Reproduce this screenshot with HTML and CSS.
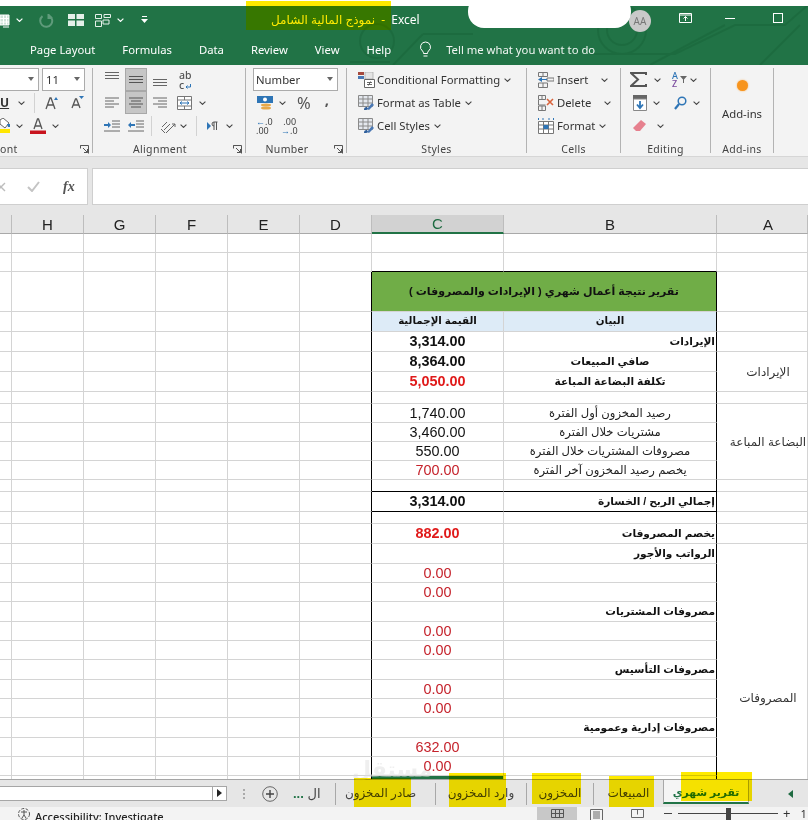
FILE: index.html
```html
<!DOCTYPE html>
<html lang="en">
<head>
<meta charset="utf-8">
<title>Excel</title>
<link rel="stylesheet" href="styles.css">
</head>
<body>
<svg class="sprite" width="0" height="0">
  <symbol id="chev" viewBox="0 0 7 4"><path d="M.6.6 3.5 3.4 6.4.6" fill="none" stroke="#444" stroke-width="1.1"/></symbol>
  <symbol id="chevw" viewBox="0 0 7 4"><path d="M.6.6 3.5 3.4 6.4.6" fill="none" stroke="#fff" stroke-width="1.2"/></symbol>
  <symbol id="launch" viewBox="0 0 9 9"><path d="M.5.5h8v8M.5.5v3M.5.5h3M3 3l4.5 4.5M4 7.5h3.5V4" fill="none" stroke="#555"/></symbol>
  <symbol id="tableico" viewBox="0 0 17 16"><path d="M.5.5h14v11H.5zM.5 4h14M5 .5v11M10 .5v11M.5 8h14" fill="#e4e8ee" stroke="#8a8a8a"/><path d="M9 14l5-6 2 2-5 5z" fill="#4a78b4"/><path d="M6 15c0-3 2-3 3-3l1 2c-1 1-2 1-4 1z" fill="#2f5f9b"/></symbol>
</svg>
<div class="app">
  <div class="chrome">
  <svg class="circuit" width="808" height="59" viewBox="0 6 808 59"><g fill="none" stroke="#1c6a3e" stroke-width="2"><circle cx="377" cy="41" r="17"/><circle cx="622" cy="30" r="24"/><circle cx="622" cy="30" r="15"/><path d="M350 62h40M423 34h50M423 34l-30 31M590 54h85l60-29h50l23-20M650 65l75-40M760 65l40-40"/></g></svg>
  <header class="titlebar">
    <svg class="t-save" width="10" height="15" viewBox="0 0 10 15"><path d="M0 1h9v10H0zM0 4.500h9M0 8h9M3.500 1v10M6.500 1v10" fill="#cfe3d8" stroke="#fff"/><path d="M3 13h6" stroke="#fff"/></svg>
    <svg class="t-chev1" width="7" height="4"><use href="#chevw"/></svg>
    <svg class="t-undo" width="15" height="15" viewBox="0 0 15 15"><path d="M10 2.500a6 6 0 1 1-6.500.6M9.500 1v4h4" fill="none" stroke="#5f9b7b" stroke-width="2"/></svg>
    <svg class="t-panes" width="16" height="13" viewBox="0 0 16 13"><path d="M0 0h7v5H0zM8.500 0H16v5H8.500zM0 6.500h7V12H0zM8.500 6.500H16V12H8.500z" fill="#e4f0e9"/></svg>
    <svg class="t-panes2" width="16" height="13" viewBox="0 0 16 13"><path d="M.5.5h6v4h-6zM9 .5h6.500v3H9zM.5 7h6v5.500h-6zM8 6h6v4H8z" fill="none" stroke="#e4f0e9"/></svg>
    <svg class="t-chev2" width="7" height="4"><use href="#chevw"/></svg>
    <svg class="t-drop" width="7" height="8" viewBox="0 0 7 8"><path d="M1 .5h5" stroke="#fff"/><path d="M0 3h7L3.500 7z" fill="#fff"/></svg>
    <div class="t-title">نموذج المالية الشامل&nbsp; - &nbsp;Excel</div>
    <div class="t-pill"></div>
    <div class="t-avatar">AA</div>
    <svg class="t-disp" width="13" height="10" viewBox="0 0 13 10"><path d="M.5.5h12v9H.5zM.5 2h12M6.500 8V3.500M4.500 5.500l2-2 2 2" fill="none" stroke="#fff"/></svg>
    <div class="t-min"></div>
    <div class="t-max"></div>
  </header>
  <nav class="tabsbar">
    <span class="tb tb-cut">t</span><span class="tb">Page Layout</span><span class="tb">Formulas</span><span class="tb">Data</span><span class="tb">Review</span><span class="tb">View</span><span class="tb">Help</span>
    <svg class="bulb" width="13" height="17" viewBox="0 0 13 17"><path d="M6.500 1a5 5 0 0 0-3 9c.8.800 1 1.500 1 2.500h4c0-1 .2-1.700 1-2.500a5 5 0 0 0-3-9zM4.500 15h4" fill="none" stroke="#fff"/></svg>
    <span class="tell">Tell me what you want to do</span>
  </nav>
  </div>

  <section class="ribbon">
    <div class="group g-font">
      <div class="row">
        <div class="combo combo-name"><svg class="caret" width="6" height="4" viewBox="0 0 6 4"><path d="M0 0h6L3 4z" fill="#666"/></svg></div>
        <div class="combo combo-size"><span>11</span><svg class="caret" width="6" height="4" viewBox="0 0 6 4"><path d="M0 0h6L3 4z" fill="#666"/></svg></div>
      </div>
      <div class="row">
        <b class="u-btn">U</b>
        <svg class="ml10" width="7" height="4"><use href="#chev"/></svg>
        <i class="vsep ml9"></i>
        <svg class="ml10" width="14" height="14" viewBox="0 0 14 14"><path d="M1 13 5 2h1l4 11M2.500 9h6" fill="none" stroke="#555" stroke-width="1.300"/><path d="M9 4l2-3 2 3z" fill="#2e75b6"/></svg>
        <svg class="ml12" width="13" height="13" viewBox="0 0 13 13"><path d="M1 12 4.500 3h1L9 12M2.500 9h5.500" fill="none" stroke="#555" stroke-width="1.300"/><path d="M8 0h5l-2.500 3z" fill="#2e75b6"/></svg>
      </div>
      <div class="row">
        <svg width="10" height="16" viewBox="0 0 10 16"><path d="M0 2l3-2 6 5-4 5-5-4z" fill="#fff" stroke="#666"/><path d="M7 6h3v3l-2 0z" fill="#2e75b6"/><path d="M0 11h10v4H0z" fill="#ffe600"/></svg>
        <svg class="ml6" width="7" height="4"><use href="#chev"/></svg>
        <svg class="ml7" width="16" height="16" viewBox="0 0 16 16"><path d="M4 11 7.500 1h1L12 11M5 8h6" fill="none" stroke="#555" stroke-width="1.300"/><path d="M0 12.500h16V16H0z" fill="#c8141e"/></svg>
        <svg class="ml6" width="7" height="4"><use href="#chev"/></svg>
      </div>
      <div class="glabel">ont<svg class="launch" width="9" height="9"><use href="#launch"/></svg></div>
    </div>

    <div class="group g-align">
      <div class="row">
        <svg class="ml12 hib" width="14" height="8" viewBox="0 0 14 8"><path d="M0 .5h14M0 3.500h14M0 6.500h14" stroke="#666"/></svg>
        <span class="alactive ml6"><svg width="14" height="8" viewBox="0 0 14 8"><path d="M0 .5h14M0 3.500h14M0 6.500h14" stroke="#555"/></svg></span>
        <svg class="ml6 lowb" width="14" height="8" viewBox="0 0 14 8"><path d="M0 .5h14M0 3.500h14M0 6.500h14" stroke="#666"/></svg>
        <span class="abc ml12">ab<br>c<svg width="6" height="5" viewBox="0 0 6 5"><path d="M5.500 0v3H1M2.500 1.500 1 3l1.500 1.500" fill="none" stroke="#2e75b6"/></svg></span>
      </div>
      <div class="row">
        <svg class="ml12" width="14" height="12" viewBox="0 0 14 12"><path d="M0 1h14M0 4h9M0 7h14M0 10h9" stroke="#666"/></svg>
        <span class="alactive ml6"><svg width="14" height="12" viewBox="0 0 14 12"><path d="M0 1h14M2 4h10M0 7h14M2 10h10" stroke="#555"/></svg></span>
        <svg class="ml6" width="14" height="12" viewBox="0 0 14 12"><path d="M0 1h14M5 4h9M0 7h14M5 10h9" stroke="#666"/></svg>
        <svg class="ml10" width="15" height="14" viewBox="0 0 15 14"><path d="M.5.5h14v13H.5zM.5 4h14M.5 10h14M7.500.5V4M7.500 10v3.500" fill="#fff" stroke="#777"/><path d="M3 7h9M3 7l2-1.500M3 7l2 1.500M12 7l-2-1.500M12 7l-2 1.500" fill="none" stroke="#2e75b6"/></svg>
        <svg class="ml7" width="7" height="4"><use href="#chev"/></svg>
      </div>
      <div class="row">
        <svg class="ml11" width="16" height="12" viewBox="0 0 16 12"><path d="M8 1h8M8 4h8M8 7h8M0 11h16" stroke="#666"/><path d="M0 4h4V2l3 3-3 3V6H0z" fill="#2e75b6"/></svg>
        <svg class="ml8" width="16" height="12" viewBox="0 0 16 12"><path d="M8 1h8M8 4h8M8 7h8M0 11h16" stroke="#666"/><path d="M7 4H3V2L0 5l3 3V6h4z" fill="#2e75b6"/></svg>
        <i class="vsep ml7"></i>
        <svg class="ml8" width="16" height="16" viewBox="0 0 16 16"><path d="M2 9 7 4M4 12l6-6M1 11l4 4M6 15 15 6M15 6v3M15 6h-3" fill="none" stroke="#666"/></svg>
        <svg class="ml4" width="7" height="4"><use href="#chev"/></svg>
        <i class="vsep ml9"></i>
        <svg class="ml10" width="12" height="10" viewBox="0 0 12 10"><path d="M0 1l4 4-4 4z" fill="#2e75b6"/><path d="M7 1v8M9.500 1v8M10.500 1H7a2 2 0 0 0 0 4" fill="none" stroke="#555"/></svg>
        <svg class="ml7" width="7" height="4"><use href="#chev"/></svg>
      </div>
      <div class="glabel lab-launch">Alignment<svg class="launch" width="9" height="9"><use href="#launch"/></svg></div>
    </div>

    <div class="group g-num">
      <div class="row"><div class="combo combo-num"><span>Number</span><svg class="caret" width="6" height="4" viewBox="0 0 6 4"><path d="M0 0h6L3 4z" fill="#666"/></svg></div></div>
      <div class="row">
        <svg class="ml11" width="16" height="16" viewBox="0 0 16 16"><path d="M0 1h16v7H0z" fill="#2e75b6"/><circle cx="8" cy="4.500" r="2" fill="#fff"/><ellipse cx="9" cy="10" rx="5" ry="1.500" fill="#e8a94a"/><ellipse cx="9" cy="13" rx="5" ry="1.500" fill="#e8a94a"/></svg>
        <svg class="ml6" width="7" height="4"><use href="#chev"/></svg>
        <span class="pct">%</span>
        <span class="comma">,</span>
      </div>
      <div class="row">
        <span class="dec ml10"><span class="arr">←</span>.0<br>.00</span>
        <span class="dec ml5">&nbsp;.00<br><span class="arr">→</span>.0</span>
      </div>
      <div class="glabel lab-launch">Number<svg class="launch" width="9" height="9"><use href="#launch"/></svg></div>
    </div>

    <div class="group g-styles">
      <div class="row">
        <svg class="sico" width="17" height="16" viewBox="0 0 17 16"><path d="M0 0h6v3H0z" fill="#a5493d"/><path d="M0 4h6v3H0z" fill="#4a78b4"/><path d="M7 0h8v7H7z" fill="#e4e4e4" stroke="#999" stroke-width=".6"/><path d="M6.500 7.500h10v8h-10z" fill="#fff" stroke="#666"/><path d="M9 10.500h5M9 12.500h5M12.500 9.500l-2 4" stroke="#444" stroke-width=".8"/></svg>
        <span class="rtext">Conditional Formatting</span><svg class="ml4" width="7" height="4"><use href="#chev"/></svg>
      </div>
      <div class="row"><svg class="sico" width="17" height="16"><use href="#tableico"/></svg><span class="rtext">Format as Table</span><svg class="ml4" width="7" height="4"><use href="#chev"/></svg></div>
      <div class="row"><svg class="sico" width="17" height="16"><use href="#tableico"/></svg><span class="rtext">Cell Styles</span><svg class="ml4" width="7" height="4"><use href="#chev"/></svg></div>
      <div class="glabel lab-center">Styles</div>
    </div>

    <div class="group g-cells">
      <div class="row">
        <svg class="cico" width="16" height="16" viewBox="0 0 16 16"><path d="M.5.500h9v4h-9zM.5 11h9v4.500h-9zM5 .5v4M5 11v4.500M9 6h7v3H9z" fill="none" stroke="#777"/><path d="M0 7.500 4 5v2h5v1H4v2z" fill="#2e75b6"/></svg>
        <span class="rtext">Insert</span><svg class="ml13" width="7" height="4"><use href="#chev"/></svg>
      </div>
      <div class="row">
        <svg class="cico" width="16" height="16" viewBox="0 0 16 16"><path d="M.5.500h7v4h-7zM.5 5v5h7M.5 11h7v4.500h-7zM4 .5v4M4 11v4.500" fill="none" stroke="#777"/><path d="M9 4l6 6M15 4l-6 6" stroke="#d9633b" stroke-width="1.600"/></svg>
        <span class="rtext">Delete</span><svg class="ml13" width="7" height="4"><use href="#chev"/></svg>
      </div>
      <div class="row">
        <svg class="cico" width="16" height="16" viewBox="0 0 16 16"><path d="M.5 3.500h15v12H.5zM.5 7h15M.5 11h15M5.500 3.500v12M10.500 3.500v12" fill="#fff" stroke="#777"/><path d="M5.500 7h5v4h-5z" fill="#2e75b6"/><path d="M.5 0v2M5 0v2M11 0v2M15.500 0v2" stroke="#2e75b6"/></svg>
        <span class="rtext">Format</span><svg class="ml4" width="7" height="4"><use href="#chev"/></svg>
      </div>
      <div class="glabel lab-center">Cells</div>
    </div>

    <div class="group g-edit">
      <div class="row">
        <svg class="ml9" width="17" height="15" viewBox="0 0 17 15"><path d="M16 3V1H1l7 6.500L1 14h15v-2" fill="none" stroke="#555" stroke-width="2"/></svg>
        <svg class="ml7" width="7" height="4"><use href="#chev"/></svg>
        <span class="az ml11"><span class="az-a">A</span><span class="az-z">Z</span></span>
        <svg class="ml2" width="7" height="7" viewBox="0 0 7 7"><path d="M0 0h7L4 3.500V7H3V3.500z" fill="#666"/></svg>
        <svg class="ml3" width="7" height="4"><use href="#chev"/></svg>
      </div>
      <div class="row">
        <svg class="ml12" width="14" height="16" viewBox="0 0 14 16"><path d="M0 0h14v4H0z" fill="#666"/><path d="M.5 4h13v11.500H.5z" fill="#fff" stroke="#888"/><path d="M7 6v6M4 9.500 7 13l3-3.500" fill="none" stroke="#2e75b6" stroke-width="1.800"/></svg>
        <svg class="ml6" width="7" height="4"><use href="#chev"/></svg>
        <svg class="ml14" width="13" height="14" viewBox="0 0 13 14"><circle cx="8" cy="5" r="3.800" fill="none" stroke="#2e75b6" stroke-width="1.500"/><path d="M5 8 1 13" stroke="#2e75b6" stroke-width="2.200"/></svg>
        <svg class="ml6" width="7" height="4"><use href="#chev"/></svg>
      </div>
      <div class="row">
        <svg class="ml12" width="13" height="12" viewBox="0 0 13 12"><path d="M8 0l5 4-6 7-4 0-3-3z" fill="#e6808e"/></svg>
        <svg class="ml11" width="7" height="4"><use href="#chev"/></svg>
      </div>
      <div class="glabel lab-center">Editing</div>
    </div>

    <div class="group g-add">
      <div class="addwrap"><span class="dot"></span><span class="rtext">Add-ins</span></div>
      <div class="glabel lab-center">Add-ins</div>
    </div>
  </section>

  <section class="formula">
    <div class="f-names"><svg class="x" width="6" height="10" viewBox="0 0 6 10"><path d="M-3 1l8 8M5 1l-8 8" stroke="#bdbdbd" stroke-width="1.400"/></svg><svg class="chk" width="13" height="11" viewBox="0 0 13 11"><path d="M1 6l4 4 7-9" fill="none" stroke="#c4c4c4" stroke-width="2"/></svg><span class="fx">fx</span></div>
    <div class="f-input"></div>
  </section>

  <div class="sheetwrap">
  <table class="sheet">
    <colgroup><col class="c0"><col class="cw"><col class="cw"><col class="cw"><col class="cw"><col class="cw"><col class="cc"><col class="cb"><col class="ca"></colgroup>
    <thead><tr><th></th><th>H</th><th>G</th><th>F</th><th>E</th><th>D</th><th class="selh">C</th><th>B</th><th class="tha">A</th></tr></thead>
    <tbody>
      <tr class="h19"><td><td><td><td><td><td><td><td><td></tr>
      <tr class="h19 topk"><td><td><td><td><td><td><td><td><td></tr>
      <tr class="h40 t"><td><td><td><td><td><td><td class="title" colspan="2">تقرير نتيجة أعمال شهري ( الإيرادات والمصروفات )</td><td></td></tr>
      <tr class="h20 t"><td><td><td><td><td><td><td class="hd">القيمة الإجمالية</td><td class="hd">البيان</td><td></td></tr>
      <tr class="h20 t"><td><td><td><td><td><td><td class="num b">3,314.00</td><td class="lab b r">الإيرادات</td><td></td></tr>
      <tr class="h20 t"><td><td><td><td><td><td><td class="num b">8,364.00</td><td class="lab b">صافي المبيعات</td><td class="side" rowspan="2">الإيرادات</td></tr>
      <tr class="h20 t"><td><td><td><td><td><td><td class="num b red">5,050.00</td><td class="lab b">تكلفة البضاعة المباعة</td></tr>
      <tr class="h12 t"><td><td><td><td><td><td><td></td><td></td><td></td></tr>
      <tr class="h19 t"><td><td><td><td><td><td><td class="num">1,740.00</td><td class="lab">رصيد المخزون أول الفترة</td><td class="side" rowspan="4">البضاعة المباعة</td></tr>
      <tr class="h19 t"><td><td><td><td><td><td><td class="num">3,460.00</td><td class="lab">مشتريات خلال الفترة</td></tr>
      <tr class="h19 t"><td><td><td><td><td><td><td class="num">550.00</td><td class="lab">مصروفات المشتريات خلال الفترة</td></tr>
      <tr class="h19 t"><td><td><td><td><td><td><td class="num dred">700.00</td><td class="lab">يخصم رصيد المخزون آخر الفترة</td></tr>
      <tr class="h12 t topk"><td><td><td><td><td><td><td></td><td></td><td></td></tr>
      <tr class="h20 t topk"><td><td><td><td><td><td><td class="num b">3,314.00</td><td class="lab b r">إجمالي الربح / الخسارة</td><td></td></tr>
      <tr class="h12 t"><td><td><td><td><td><td><td></td><td></td><td></td></tr>
      <tr class="h20 t"><td><td><td><td><td><td><td class="num b red">882.00</td><td class="lab b r">يخصم المصروفات</td><td></td></tr>
      <tr class="h20 t"><td><td><td><td><td><td><td></td><td class="lab b r">الرواتب والأجور</td><td class="side" rowspan="16">المصروفات</td></tr>
      <tr class="h19 t"><td><td><td><td><td><td><td class="num dred">0.00</td><td></td></tr>
      <tr class="h19 t"><td><td><td><td><td><td><td class="num dred">0.00</td><td></td></tr>
      <tr class="h20 t"><td><td><td><td><td><td><td></td><td class="lab b r">مصروفات المشتريات</td></tr>
      <tr class="h19 t"><td><td><td><td><td><td><td class="num dred">0.00</td><td></td></tr>
      <tr class="h19 t"><td><td><td><td><td><td><td class="num dred">0.00</td><td></td></tr>
      <tr class="h20 t"><td><td><td><td><td><td><td></td><td class="lab b r">مصروفات التأسيس</td></tr>
      <tr class="h19 t"><td><td><td><td><td><td><td class="num dred">0.00</td><td></td></tr>
      <tr class="h19 t"><td><td><td><td><td><td><td class="num dred">0.00</td><td></td></tr>
      <tr class="h20 t"><td><td><td><td><td><td><td></td><td class="lab b r">مصروفات إدارية وعمومية</td></tr>
      <tr class="h19 t"><td><td><td><td><td><td><td class="num dred">632.00</td><td></td></tr>
      <tr class="h19 t"><td><td><td><td><td><td><td class="num dred">0.00</td><td></td></tr>
      <tr class="h19 t"><td><td><td><td><td><td><td class="selcell"></td><td></td></tr>
      <tr class="h19 t"><td><td><td><td><td><td><td></td><td></td></tr>
      <tr class="h19 t"><td><td><td><td><td><td><td></td><td></td></tr>
      <tr class="h19 t"><td><td><td><td><td><td><td></td><td></td></tr>
    </tbody>
  </table>
  </div>

  <section class="sheetbar">
    <div class="hscroll"><span class="hbtn"><svg width="5" height="8" viewBox="0 0 5 8"><path d="M0 0l5 4-5 4z" fill="#222"/></svg></span></div>
    <span class="vdots"></span>
    <svg class="plus" width="16" height="16" viewBox="0 0 16 16"><circle cx="8" cy="8" r="7.300" fill="none" stroke="#666"/><path d="M8 4v8M4 8h8" stroke="#444" stroke-width="1.400"/></svg>
    <span class="more"><b>...</b> ال</span>
    <span class="tab tab1">صادر المخزون</span>
    <span class="tab tab2">وارد المخزون</span>
    <span class="tab tab3">المخزون</span>
    <span class="tab tab4">المبيعات</span>
    <span class="tab active">تقرير شهري</span>
    <svg class="navr" width="5" height="8" viewBox="0 0 5 8"><path d="M5 0 0 4l5 4z" fill="#1f6b42"/></svg>
  </section>

  <footer class="status">
    <svg class="acc" width="14" height="13" viewBox="0 0 14 13"><circle cx="7" cy="7" r="5.500" fill="none" stroke="#555" stroke-dasharray="3 1.500"/><path d="M7 3v5M4 5h6M7 8 5 11M7 8l2 3" fill="none" stroke="#555"/></svg>
    <span class="acc-text">Accessibility: Investigate</span>
    <span class="v-normal"><svg width="13" height="9" viewBox="0 0 13 9"><path d="M.5.500h12v8H.5zM.5 4.500h12M4.500.5v8M8.500.5v8" fill="none" stroke="#555"/></svg></span>
    <svg class="v-page" width="13" height="11" viewBox="0 0 13 11"><path d="M.5.500h12v11H.5zM3 3h7M3 5h7M3 7h7M3 9h7" fill="none" stroke="#666"/></svg>
    <svg class="v-break" width="13" height="9" viewBox="0 0 13 9"><path d="M.5.500h12v8H.5zM6.500.5v5" fill="none" stroke="#666"/></svg>
    <span class="zoom-minus"></span>
    <span class="slider"><i></i></span>
    <span class="zoom-plus">+</span>
    <span class="zoom-val">1</span>
  </footer>

  <span class="watermark">مستقل</span>
  <div class="hl hl-title"></div>
  <div class="hl-tint"></div>
  <div class="hl hl-tab1"></div>
  <div class="hl hl-tab2"></div>
  <div class="hl hl-tab3"></div>
  <div class="hl hl-tab4"></div>
  <div class="hl hl-active"></div>
</div>
</body>
</html>
```
FILE: styles.css
```css
* { box-sizing: border-box; }
html, body { margin: 0; padding: 0; background: #fff; }
.sprite { position: absolute; }
.app {
  position: relative; width: 808px; height: 820px; overflow: hidden;
  font-family: "Noto Sans", "Open Sans", sans-serif; font-size: 11.3px; color: #333;
  padding-top: 6px; background: #fff;
}
svg { flex: none; display: block; }

/* title bar */
.chrome { position: relative; background: #217346; height: 59px; }
.circuit { position: absolute; left: 0; top: 0; opacity: .8; }
.titlebar { display: flex; align-items: center; height: 28px; color: #fff; position: relative; }
.t-save { margin-left: 0; margin-top: 3px; }
.t-chev1 { margin-left: 6px; }
.t-undo { margin-left: 16px; }
.t-panes { margin-left: 14px; }
.t-panes2 { margin-left: 11px; }
.t-chev2 { margin-left: 6px; }
.t-drop { margin-left: 17px; }
.t-title { margin-left: 123px; font-family: "Noto Sans", "DejaVu Sans", sans-serif; font-size: 12px; color: #fff; white-space: nowrap; direction: ltr; width: 194px; margin-top: -2px; }
.t-pill { width: 163px; height: 33px; background: #fff; margin-left: 3px; margin-top: -6px; border-radius: 16px; transform: translateY(-6px); }
.t-avatar { width: 22px; height: 22px; margin-left: -2px; background: #c9c9c9; border-radius: 50%; color: #777; font-size: 10px; line-height: 22px; text-align: center; margin-top: 2px; }
.t-disp { margin-left: 28px; margin-top: -4px; }
.t-min { width: 10px; height: 1px; background: #fff; margin-left: 33px; margin-top: -3px; }
.t-max { width: 10px; height: 10px; border: 1px solid #fff; margin-left: 38px; margin-top: -4px; }

/* tabs */
.tabsbar { display: flex; align-items: center; height: 31px; color: #fff; padding-bottom: 1px; position: relative; }
.tb { margin-right: 27px; white-space: nowrap; }
.tb-cut { width: 30px; margin: 0; text-indent: -4px; }
.bulb { margin-left: 1px; }
.tell { margin-left: 14px; white-space: nowrap; color: #f0f6f2; }

/* ribbon */
.ribbon { display: flex; height: 92px; padding-top: 3px; background: #f3f3f3; border-bottom: 1px solid #d6d6d6; }
.group { height: 85px; border-right: 1px solid #b3b3b3; flex: none; position: relative; }
.g-font { width: 93px; }
.g-align { width: 153px; }
.g-num { width: 101px; }
.g-styles { width: 180px; }
.g-cells { width: 94px; }
.g-edit { width: 90px; }
.g-add { width: 63px; }
.row { display: flex; align-items: center; height: 23px; white-space: nowrap; }
.glabel { position: relative; margin-top: 4px; height: 16px; line-height: 16px; font-size: 10.5px; letter-spacing: .3px; color: #444; }
.lab-center { text-align: center; }
.lab-launch { text-align: center; padding-right: 18px; }
.launch { position: absolute; right: 3px; top: 4px; }
.combo { position: relative; height: 23px; background: #fff; border: 1px solid #ababab; display: flex; align-items: center; }
.caret { position: absolute; right: 4px; top: 8px; }
.combo-name { width: 60px; margin-left: -21px; margin-right: 3px; }
.combo-size { width: 43px; padding-left: 3px; }
.combo-num { width: 85px; margin-left: 7px; padding-left: 2px; }
.vsep { display: block; width: 1px; height: 20px; background: #d2d2d2; flex: none; }
.u-btn { width: 8px; font-size: 12px; text-decoration: underline; }
.ml2 { margin-left: 2px; } .ml3 { margin-left: 3px; } .ml4 { margin-left: 4px; } .ml5 { margin-left: 5px; }
.ml6 { margin-left: 6px; } .ml7 { margin-left: 7px; } .ml8 { margin-left: 8px; } .ml9 { margin-left: 9px; }
.ml10 { margin-left: 10px; } .ml11 { margin-left: 11px; } .ml12 { margin-left: 12px; } .ml13 { margin-left: 13px; } .ml14 { margin-left: 14px; }
.alactive { width: 22px; height: 23px; background: #c6c6c6; border: 1px solid #a8a8a8; display: flex; align-items: center; justify-content: center; flex: none; }
.hib { margin-top: -7px; }
.lowb { margin-top: 7px; }
.abc { font-size: 10.5px; line-height: 10px; color: #555; font-weight: 500; width: 14px; }
.abc svg { display: inline-block; margin-left: 1px; }
.pct { font-size: 16.5px; margin-left: 11px; color: #555; }
.comma { font-size: 15px; font-weight: 700; margin-left: 14px; margin-top: -8px; color: #555; }
.dec { font-size: 9px; line-height: 9px; width: 20px; color: #444; }
.arr { color: #2e75b6; }
.sico { margin-left: 11px; margin-right: 2px; }
.cico { margin-left: 11px; margin-right: 3px; }
.rtext { color: #333; }
.az { display: flex; flex-direction: column; line-height: 8px; font-size: 9px; font-weight: 500; }
.az-a { color: #2e75b6; } .az-z { color: #7a4a9e; }
.addwrap { height: 69px; display: flex; flex-direction: column; align-items: center; }
.dot { width: 11px; height: 11px; border-radius: 50%; background: #f7941d; box-shadow: 0 0 2px #f9b262; margin-top: 12px; margin-bottom: 15px; }

/* formula */
.formula { display: flex; gap: 4px; height: 58px; background: #e6e6e6; padding-top: 11px; }
.f-names { display: flex; align-items: center; width: 88px; height: 37px; background: #fff; border: 1px solid #cfcfcf; border-left: 0; }
.f-input { flex: 1; height: 37px; background: #fff; border: 1px solid #cfcfcf; border-right: 0; }
.chk { margin-left: 21px; }
.fx { margin-left: 23px; font-family: "Liberation Serif", serif; font-style: italic; font-weight: 700; font-size: 14px; color: #555; }

/* sheet */
.sheetwrap { height: 564px; overflow: hidden; background: #fff; }
.sheet { border-collapse: separate; border-spacing: 0; table-layout: fixed; width: 808px; font-family: "Liberation Sans", "DejaVu Sans", sans-serif; color: #111; }
.c0 { width: 12px; } .cw { width: 72px; } .cc { width: 132px; } .cb { width: 213px; } .ca { width: 91px; }
th { height: 19px; padding: 0; background: #e6e6e6; border-right: 1px solid #bdbdbd; border-bottom: 1px solid #a9a9a9; font-weight: 400; font-size: 15px; color: #222; line-height: 17px; }
th.selh { background: #d2d2d2; color: #1f6b42; border-bottom: 2px solid #217346; }
th.tha { padding-left: 12px; }
td { padding: 0; border-right: 1px solid #d4d4d4; border-bottom: 1px solid #d4d4d4; overflow: hidden; white-space: nowrap; line-height: 1; }
tr.h12 td { height: 12px; } tr.h19 td { height: 19px; } tr.h20 td { height: 20px; } tr.h40 td { height: 40px; }
tr.t td:nth-child(6), tr.t td:nth-child(8) { border-right-color: #000; }
tr.t td.title { border-right-color: #000; }
tr.h40 td:last-child { border-right-color: #d4d4d4; }
tr.topk td:nth-child(7), tr.topk td:nth-child(8) { border-bottom-color: #000; }
tr.h40 td:last-child { border-bottom-color: #d4d4d4; }
.title { background: #70ad47; text-align: center; font-weight: 700; font-size: 11px; direction: rtl; color: #111; }
.hd { background: #ddebf7; text-align: center; font-weight: 700; font-size: 10.3px; direction: rtl; }
.num { text-align: center; font-size: 14.4px; }
.lab { text-align: center; direction: rtl; font-size: 11.6px; color: #222; }
.lab.b { font-size: 10.6px; color: #111; }
.lab.r { padding-right: 1px; text-align: start; }
.b { font-weight: 700; color: #111; }
.red { color: #e01a1a; }
.dred { color: #c5222b; }
.side { text-align: center; direction: rtl; font-size: 12px; color: #333; padding-left: 12px; }
td.selcell { box-shadow: inset 0 3px 0 #217346; }

/* sheet tabs */
.sheetbar { display: flex; align-items: center; height: 28px; background: #e6e6e6; border-top: 1px solid #a5a5a5; font-family: "Liberation Sans", "DejaVu Sans", sans-serif; }
.hscroll { display: flex; justify-content: flex-end; width: 227px; height: 15px; background: #fff; border: 1px solid #a6a6a6; border-left: 0; margin-top: -1px; }
.hbtn { width: 14px; border-left: 1px solid #a6a6a6; display: flex; align-items: center; justify-content: center; }
.vdots { margin-left: 16px; width: 2px; height: 10px; border-left: 2px dotted #aaa; }
.plus { margin-left: 17px; }
.more { margin-left: 15px; width: 42px; color: #444; font-size: 13px; white-space: nowrap; }
.more b { color: #217346; letter-spacing: 1px; }
.tab { direction: rtl; font-size: 12px; color: #444; white-space: nowrap; text-align: center; height: 22px; line-height: 20px; border-left: 1px solid #a8a8a8; flex: none; }
.tab1 { width: 100px; padding-right: 10px; }
.tab2 { width: 91px; }
.tab3 { width: 67px; }
.tab4 { width: 70px; }
.active { width: 86px; height: 24px; align-self: flex-start; line-height: 25px; color: #217346; font-weight: 700; font-size: 10.8px; background: #f5f5f5; border-left: 1px solid #a8a8a8; border-right: 1px solid #a8a8a8; border-bottom: 2px solid #217346; }
.navr { margin-left: 39px; }

/* status */
.status { display: flex; height: 13px; background: #f3f3f3; font-size: 11px; overflow: hidden; }
.acc { margin-left: 17px; }
.acc-text { margin-left: 4px; width: 502px; line-height: 20px; font-weight: 500; color: #222; white-space: nowrap; }
.v-normal { width: 40px; height: 13px; background: #c8c8c8; display: flex; justify-content: center; padding-top: 2px; }
.v-page { margin-left: 13px; margin-top: 2px; }
.v-break { margin-left: 28px; margin-top: 2px; }
.zoom-minus { width: 8px; height: 1px; background: #444; margin: 6px 0 0 20px; }
.slider { position: relative; width: 100px; height: 1px; background: #444; margin: 6px 0 0 6px; display: block; }
.slider i { position: absolute; left: 48px; top: -5px; width: 5px; height: 12px; background: #444; }
.zoom-plus { margin-left: 5px; line-height: 13px; font-size: 13px; }
.zoom-val { margin-left: 10px; line-height: 13px; }

/* overlays */
.watermark { position: absolute; left: 352px; top: 757px; font-family: "DejaVu Sans", sans-serif; font-size: 22px; font-weight: 700; color: #ddd; opacity: .45; }
.hl { position: absolute; background: #ffeb00; mix-blend-mode: multiply; }
.hl-title { left: 246px; top: 1px; width: 145px; height: 29px; }
.hl-tint { position: absolute; left: 246px; top: 6px; width: 145px; height: 24px; background: rgba(255, 235, 0, .1); }
.hl-tab1 { left: 354px; top: 778px; width: 57px; height: 29px; }
.hl-tab2 { left: 449px; top: 773px; width: 57px; height: 34px; }
.hl-tab3 { left: 532px; top: 773px; width: 49px; height: 31px; }
.hl-tab4 { left: 609px; top: 776px; width: 45px; height: 31px; }
.hl-active { left: 681px; top: 772px; width: 71px; height: 29px; }
```
